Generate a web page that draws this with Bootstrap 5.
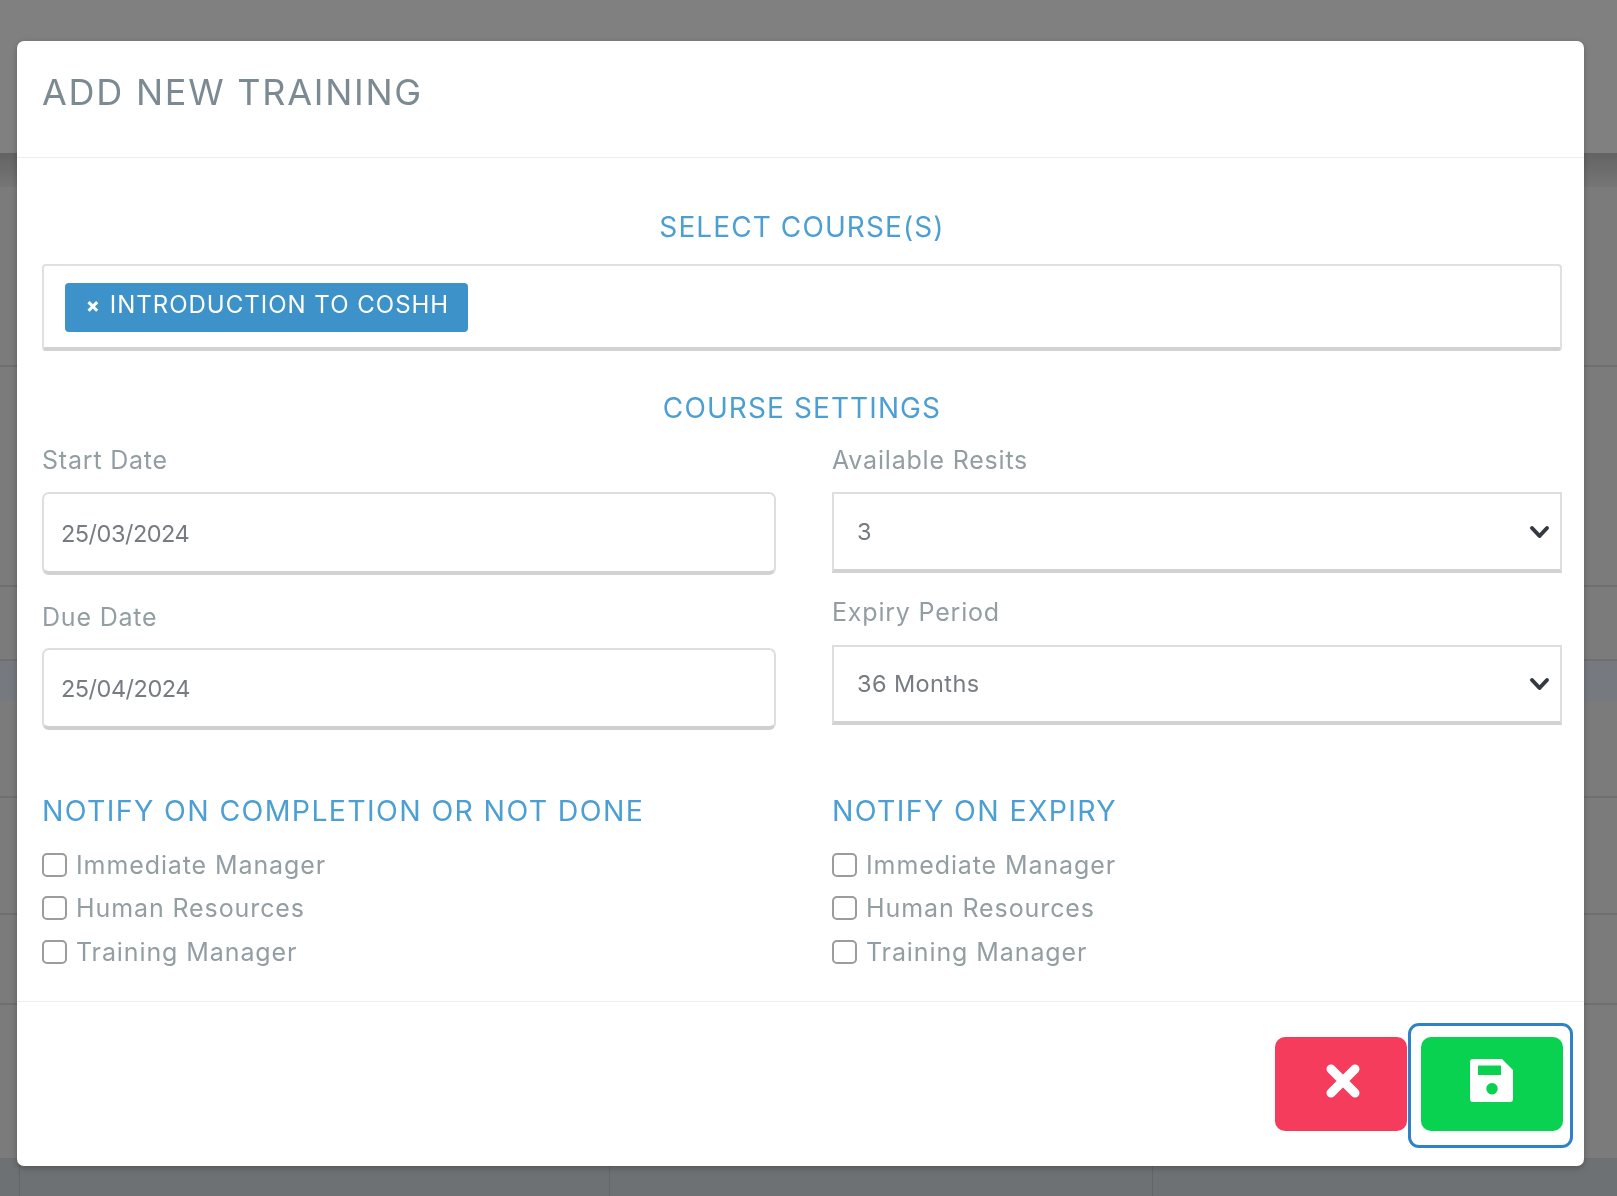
<!DOCTYPE html>
<html lang="en">
<head>
<meta charset="utf-8">
<title>Add new training</title>
<link rel="stylesheet" href="https://cdn.jsdelivr.net/npm/bootstrap@5.3.0/dist/css/bootstrap.min.css">
<style>
html,body{height:1196px;overflow:hidden}
body{background:#7d7d7d;font-family:Inter,"Liberation Sans",sans-serif}
.under-row{border-bottom:2px solid #6f6f6f;background:#7b7b7b}
.under-top{height:153px;background:#808080;border:0}
.under-shade{height:34px;background:linear-gradient(#636363,#767676);border:0}
.under-a{height:180px}.under-b{height:220px}.under-c{height:74px}.under-d{height:40px;background:#767a80;border:0}
.under-e{height:97px}.under-f{height:117px}.under-g{height:90px}.under-h{height:153px;border:0}
.under-foot{height:40px;background:#6e7173;border:0}
.under-foot span{display:block;height:100%;border-right:1px solid #636668}
.cell-a{width:20px}.cell-b{width:590px}.cell-c{width:543px}
.train-modal{display:block;position:fixed;inset:0;overflow:hidden;z-index:1055}
.train-dialog{margin:41px 33px 0 17px;height:1125px;display:flex;flex-direction:column;background:#fff;border-radius:7px;box-shadow:0 2px 6px rgba(0,0,0,.25);filter:blur(.35px)}
.train-head{height:117px;border-bottom:1px solid #ecedf3;padding:0 25px;display:flex;align-items:center}
.train-title{margin:0;font-size:36px;font-weight:400;color:#7c8a92;line-height:1;letter-spacing:1.75px;position:relative;top:-7px}
.train-body{padding:54px 22px 27px 25px}
.blue-head{font-size:28px;font-weight:400;color:#4c9fd3;line-height:30px;margin:0;letter-spacing:1.1px}
.h-a{margin-bottom:22px}
.h-b{margin-top:41px;position:relative;top:1px}
.tag-box{height:87px;border:2px solid #e0e0e0;border-bottom:4px solid #d2d2d2;border-radius:4px;padding:17px 21px}
.course-tag{display:inline-flex;align-items:center;height:49px;width:403px;background:#3c92c9;color:#fff;border-radius:4px;padding:0 0 5px 21px;font-size:24px;line-height:1;gap:10px;letter-spacing:1px}
.course-tag b{font-size:20px;font-weight:800;letter-spacing:0}
.col-l{padding-right:26px}
.col-r{padding-left:30px}
.f-label{display:block;font-size:25px;line-height:24px;color:#939ea3;margin:0;letter-spacing:.8px;position:relative;top:1px}
.m-25{margin-top:25px}
.m-29{margin-top:29px}
.m-26{margin-top:26px}
.date-field.form-control{height:83px;margin-top:21px;border:2px solid #dedede;border-bottom:4px solid #d2d2d2;border-radius:7px;padding:2px 17px 0;font-size:23.5px;color:#767c82;box-shadow:none;letter-spacing:-.5px}
.date-field.due{height:82px;margin-top:20px;border-bottom-color:#cfcfcf;padding-top:0}
.sel-field.form-select{height:81px;margin-top:21px;border:2px solid #dedede;border-bottom:4px solid #d2d2d2;border-radius:0;padding:0 40px 0 23px;font-size:23.5px;letter-spacing:.4px;color:#767c82;background-size:21px 14px;background-position:right 10px center;background-image:url("data:image/svg+xml,%3Csvg xmlns='http://www.w3.org/2000/svg' viewBox='0 0 21 14'%3E%3Cpath fill='none' stroke='%23343a40' stroke-width='4' stroke-linecap='round' stroke-linejoin='round' d='M3 3l7.500 8L18 3'/%3E%3C/svg%3E")}
.sel-field.second{height:80px;margin-top:22px}
.notify-row{margin-top:65px}
.notify-head{font-size:28.5px;letter-spacing:1.35px;position:relative;top:1px}
.check-list{margin-top:18px;display:flex;flex-direction:column}
.check-row.form-check{min-height:0;height:43.5px;margin:0;padding:0;display:flex;align-items:center;gap:9px}
.check-row .form-check-input{float:none;margin:0;width:25px;height:24px;border:2px solid #9c9c9c;border-radius:5px;flex:none}
.check-row .form-check-label{font-size:25px;line-height:24px;color:#939ea3;letter-spacing:.9px}
.train-foot{flex:1;border-top:1px solid #e9eef0;padding:35px 21px 0 0;display:flex;justify-content:flex-end;align-items:flex-start;gap:14px}
.act-btn.btn{height:94px;border:0;border-radius:10px;display:flex;align-items:center;justify-content:center;padding:0}
.act-cancel.btn{width:132px;background:#f53c5c;padding:0 0 6px 4px}
.act-save.btn{width:142px;background:#0ad251;position:relative;padding:0 0 6px 0}
.focus-mark{position:absolute;left:-13px;right:-10px;top:-14px;bottom:-17px;border:3px solid #2f82c9;border-radius:11px;pointer-events:none}
</style>
</head>
<body>
<div aria-hidden="true">
  <div class="under-row under-top"></div>
  <div class="under-row under-shade"></div>
  <div class="under-row under-a"></div>
  <div class="under-row under-b"></div>
  <div class="under-row under-c"></div>
  <div class="under-row under-d"></div>
  <div class="under-row under-e"></div>
  <div class="under-row under-f"></div>
  <div class="under-row under-g"></div>
  <div class="under-row under-h"></div>
  <div class="under-row under-foot d-flex"><span class="cell-a"></span><span class="cell-b"></span><span class="cell-c"></span></div>
</div>
<div class="train-modal">
  <div class="train-dialog">
    <div class="train-head"><h5 class="train-title">ADD NEW TRAINING</h5></div>
    <div class="train-body">
      <h6 class="blue-head text-center h-a">SELECT COURSE(S)</h6>
      <div class="tag-box"><span class="course-tag"><b>×</b>INTRODUCTION TO COSHH</span></div>
      <h6 class="blue-head text-center h-b">COURSE SETTINGS</h6>
      <div class="row g-0">
        <div class="col-6 col-l">
          <label class="f-label m-25" for="sd">Start Date</label>
          <input id="sd" class="form-control date-field" value="25/03/2024">
          <label class="f-label m-29" for="dd">Due Date</label>
          <input id="dd" class="form-control date-field due" value="25/04/2024">
        </div>
        <div class="col-6 col-r">
          <label class="f-label m-25" for="ar">Available Resits</label>
          <select id="ar" class="form-select sel-field"><option>3</option></select>
          <label class="f-label m-26" for="ep">Expiry Period</label>
          <select id="ep" class="form-select sel-field second"><option>36 Months</option></select>
        </div>
      </div>
      <div class="row g-0 notify-row">
        <div class="col-6 col-l">
          <h6 class="blue-head notify-head">NOTIFY ON COMPLETION OR NOT DONE</h6>
          <div class="check-list">
            <div class="form-check check-row"><input class="form-check-input" type="checkbox" id="a1"><label class="form-check-label" for="a1">Immediate Manager</label></div>
            <div class="form-check check-row"><input class="form-check-input" type="checkbox" id="a2"><label class="form-check-label" for="a2">Human Resources</label></div>
            <div class="form-check check-row"><input class="form-check-input" type="checkbox" id="a3"><label class="form-check-label" for="a3">Training Manager</label></div>
          </div>
        </div>
        <div class="col-6 col-r">
          <h6 class="blue-head notify-head">NOTIFY ON EXPIRY</h6>
          <div class="check-list">
            <div class="form-check check-row"><input class="form-check-input" type="checkbox" id="b1"><label class="form-check-label" for="b1">Immediate Manager</label></div>
            <div class="form-check check-row"><input class="form-check-input" type="checkbox" id="b2"><label class="form-check-label" for="b2">Human Resources</label></div>
            <div class="form-check check-row"><input class="form-check-input" type="checkbox" id="b3"><label class="form-check-label" for="b3">Training Manager</label></div>
          </div>
        </div>
      </div>
    </div>
    <div class="train-foot">
      <button type="button" class="btn act-btn act-cancel" aria-label="Cancel">
        <svg width="36" height="36" viewBox="0 0 36 36"><path d="M6 6l24 24M30 6L6 30" fill="none" stroke="#fff" stroke-width="9" stroke-linecap="round"/></svg>
      </button>
      <button type="button" class="btn act-btn act-save" aria-label="Save">
        <svg width="44" height="43" viewBox="0 0 44 43"><path fill="#fff" fill-rule="evenodd" d="M3 0h29l11 11v29a3 3 0 0 1-3 3H3a3 3 0 0 1-3-3V3a3 3 0 0 1 3-3zM8 6.500v9.500h23V6.500zM22 24a5.700 5.700 0 1 0 .01 0z"/></svg>
        <span class="focus-mark"></span>
      </button>
    </div>
  </div>
</div>
<script src="https://cdn.jsdelivr.net/npm/bootstrap@5.3.0/dist/js/bootstrap.bundle.min.js"></script>
</body>
</html>
